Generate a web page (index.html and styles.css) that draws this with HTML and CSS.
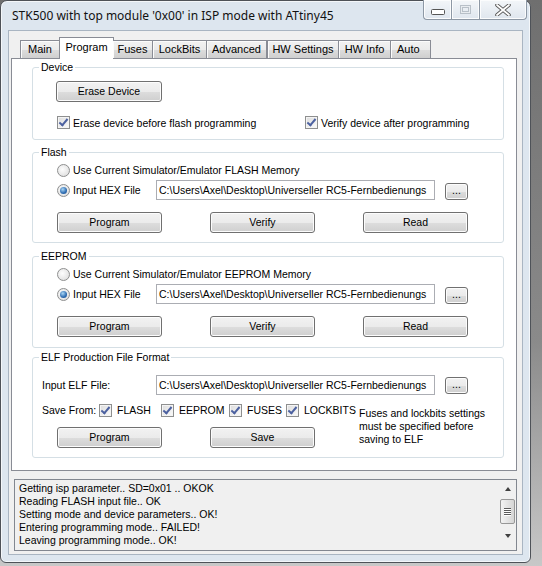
FILE: index.html
```html
<!DOCTYPE html>
<html>
<head>
<meta charset="utf-8">
<link rel="stylesheet" href="styles.css">
</head>
<body>
<div class="window">
  <div class="titlebar">
    <div class="title">STK500 with top module '0x00' in ISP mode with ATtiny45</div>
    <div class="caption">
      <div class="cbtn cmin"><svg width="14" height="6" viewBox="0 0 14 6"><rect x="0.5" y="0.5" width="13" height="5" rx="1" fill="#fff" stroke="#555"/></svg></div>
      <div class="cbtn cmax"><svg width="11" height="9" viewBox="0 0 11 9"><rect x="0.5" y="0.5" width="10" height="8" fill="none" stroke="#b8c0c8"/><rect x="1.5" y="1.5" width="8" height="6" fill="none" stroke="#e8ecf0"/><rect x="2.5" y="2.5" width="6" height="4" fill="none" stroke="#b8c0c8"/></svg></div>
      <div class="cbtn cclose"><svg width="16" height="12" viewBox="0 0 16 12"><path d="M2 1 L14 11 M14 1 L2 11" stroke="#555" stroke-width="3.6" stroke-linecap="round"/><path d="M2 1 L14 11 M14 1 L2 11" stroke="#fff" stroke-width="1.8" stroke-linecap="round"/></svg></div>
    </div>
  </div>
  <div class="client">
    <div class="tabs">
      <div class="tab t-main">Main</div>
      <div class="tab sel t-prog">Program</div>
      <div class="tab t-fuses">Fuses</div>
      <div class="tab t-lock">LockBits</div>
      <div class="tab t-adv">Advanced</div>
      <div class="tab t-hws">HW Settings</div>
      <div class="tab t-hwi">HW Info</div>
      <div class="tab t-auto">Auto</div>
    </div>
    <div class="panel">
      <div class="group g-device">
        <div class="legend">Device</div>
        <div class="row r-erase"><div class="btn b-erase">Erase Device</div></div>
        <div class="row r-checks">
          <div class="chk c-erase"><span class="box on"></span><span>Erase device before flash programming</span></div>
          <div class="chk c-verify"><span class="box on"></span><span>Verify device after programming</span></div>
        </div>
      </div>

      <div class="group g-mem g-flash">
        <div class="legend">Flash</div>
        <div class="row r-radio1"><div class="rad"><span class="dot"></span><span>Use Current Simulator/Emulator FLASH Memory</span></div></div>
        <div class="row r-radio2">
          <div class="rad r-lbl"><span class="dot on"></span><span>Input HEX File</span></div>
          <div class="tbox">C:\Users\Axel\Desktop\Universeller RC5-Fernbedienungs</div>
          <div class="btn b-dots">...</div>
        </div>
        <div class="row r-btns">
          <div class="btn b-act">Program</div>
          <div class="btn b-act">Verify</div>
          <div class="btn b-act">Read</div>
        </div>
      </div>

      <div class="group g-mem g-eeprom">
        <div class="legend">EEPROM</div>
        <div class="row r-radio1"><div class="rad"><span class="dot"></span><span>Use Current Simulator/Emulator EEPROM Memory</span></div></div>
        <div class="row r-radio2">
          <div class="rad r-lbl"><span class="dot on"></span><span>Input HEX File</span></div>
          <div class="tbox">C:\Users\Axel\Desktop\Universeller RC5-Fernbedienungs</div>
          <div class="btn b-dots">...</div>
        </div>
        <div class="row r-btns">
          <div class="btn b-act">Program</div>
          <div class="btn b-act">Verify</div>
          <div class="btn b-act">Read</div>
        </div>
      </div>

      <div class="group g-elf">
        <div class="legend">ELF Production File Format</div>
        <div class="row r-elf1">
          <div class="elf-lbl">Input ELF File:</div>
          <div class="tbox">C:\Users\Axel\Desktop\Universeller RC5-Fernbedienungs</div>
          <div class="btn b-dots">...</div>
        </div>
        <div class="row r-elf2">
          <div class="save-lbl">Save From:</div>
          <div class="chk e-flash"><span class="box on"></span><span>FLASH</span></div>
          <div class="chk e-eeprom"><span class="box on"></span><span>EEPROM</span></div>
          <div class="chk e-fuses"><span class="box on"></span><span>FUSES</span></div>
          <div class="chk e-lock"><span class="box on"></span><span>LOCKBITS</span></div>
          <div class="note">Fuses and lockbits settings<br>must be specified before<br>saving to ELF</div>
        </div>
        <div class="row r-btns">
          <div class="btn b-act">Program</div>
          <div class="btn b-act">Save</div>
        </div>
      </div>
    </div>

    <div class="log">
      <div class="log-text">
        <div>Getting isp parameter.. SD=0x01 .. OKOK</div>
        <div>Reading FLASH input file.. OK</div>
        <div>Setting mode and device parameters.. OK!</div>
        <div>Entering programming mode.. FAILED!</div>
        <div>Leaving programming mode.. OK!</div>
      </div>
      <div class="vscroll">
        <div class="arrow up"></div>
        <div class="track"><div class="thumb"><span></span><span></span><span></span><span></span></div></div>
        <div class="arrow down"></div>
      </div>
    </div>
  </div>
</div>
</body>
</html>
```
FILE: styles.css
```css
html, body {
  margin: 0;
  padding: 0;
}
body {
  width: 542px;
  height: 566px;
  overflow: hidden;
  background: linear-gradient(to bottom, #6f6f6f 0%, #8a8a8a 60%, #c8c8c8 100%);
  font-family: "Liberation Sans", Arial, sans-serif;
  font-size: 10.5px;
  color: #000;
}
.window {
  box-sizing: border-box;
  width: 531px;
  height: 563px;
  border: 1px solid #4e5258;
  border-radius: 7px 7px 6px 6px;
  background: #dde6ef;
  box-shadow: inset 0 0 0 1px #f4f7fa;
  display: flex;
  flex-direction: column;
}
.titlebar {
  height: 29px;
  display: flex;
  align-items: flex-start;
}
.title {
  margin-left: 11px;
  margin-top: 6px;
  font-family: "Noto Sans", "Open Sans", sans-serif;
  font-size: 12px;
  line-height: 18px;
  color: #111;
  white-space: nowrap;
}
.caption {
  margin-left: auto;
  margin-right: 3px;
  display: flex;
  height: 20px;
  margin-top: -1px;
}
.cbtn {
  height: 19px;
  border: 1px solid #8d98a5;
  border-top: none;
  background: linear-gradient(to bottom, #f3f6f9, #dfe6ee);
  display: flex;
  align-items: center;
  justify-content: center;
  box-shadow: inset 0 0 0 1px #fbfcfd;
}
.cmin { width: 27px; border-radius: 0 0 0 4px; border-right: none; }
.cmax { width: 27px; }
.cclose { width: 46px; border-left: none; border-radius: 0 0 4px 0; }
.cmin svg { margin-top: 5px; }

.client {
  margin: 0 7px 0 7px;
  height: 525px;
  box-sizing: border-box;
  border: 1px solid #a9b5c2;
  background: #f0f0f0;
}
.tabs {
  height: 27px;
  display: flex;
  align-items: flex-end;
  padding-left: 11px;
  position: relative;
  z-index: 1;
  font-size: 11px;
}
.tab {
  box-sizing: border-box;
  height: 18px;
  border: 1px solid #898c95;
  border-bottom: none;
  border-left: none;
  background: linear-gradient(to bottom, #f2f2f2 0%, #ebebeb 50%, #dddddd 51%, #cfcfcf 100%);
  text-align: center;
  line-height: 17px;
  white-space: nowrap;
  box-shadow: inset 1px 1px 0 #fcfcfc;
}
.t-main { width: 40px; border-left: 1px solid #898c95; }
.t-prog { width: 53px; }
.t-fuses { width: 40px; }
.t-lock { width: 54px; }
.t-adv { width: 60px; }
.t-hws { width: 72px; border-left: 1px solid #898c95; }
.t-hwi { width: 52px; }
.t-auto { width: 40px; text-align: left; padding-left: 6px; }
.tab.sel {
  height: 22px;
  margin-bottom: -1px;
  margin-left: -1px;
  margin-right: -1px;
  width: 55px;
  background: #fff;
  border-left: 1px solid #898c95;
  box-shadow: none;
  line-height: 18px;
}
.panel {
  box-sizing: border-box;
  margin-left: 2px;
  margin-right: 5px;
  height: 413px;
  border: 1px solid #898c95;
  background: #fff;
  padding: 8px 12px 0 20px;
}
.group {
  box-sizing: border-box;
  border: 1px solid #d5dfe5;
  border-radius: 3px;
}
.legend {
  height: 14px;
  line-height: 13px;
  margin-top: -7px;
  margin-left: 6px;
  padding: 0 2px;
  width: fit-content;
  background: #fff;
}
.row {
  display: flex;
  align-items: center;
}
.btn {
  box-sizing: border-box;
  height: 21px;
  border: 1px solid #707070;
  border-radius: 3px;
  background: linear-gradient(to bottom, #f2f2f2 0%, #ebebeb 50%, #dddddd 51%, #cfcfcf 100%);
  box-shadow: inset 0 0 0 1px #fcfcfc;
  text-align: center;
  line-height: 19px;
}
.g-device { height: 73px; }
.r-erase { margin-top: 6px; padding-left: 23px; }
.b-erase { width: 106px; }
.r-checks { margin-top: 14px; height: 13px; padding-left: 24px; }
.chk { display: flex; align-items: center; height: 13px; white-space: nowrap; }
.box {
  box-sizing: border-box;
  width: 13px;
  height: 13px;
  border: 1px solid #8e8f8f;
  background: linear-gradient(135deg, #dcdcdc, #fbfbfb);
  box-shadow: inset 0 0 0 1px #f4f4f4;
  margin-right: 3px;
  position: relative;
  flex: none;
}
.box.on::after {
  content: "";
  position: absolute;
  left: 3px;
  top: 0px;
  width: 3px;
  height: 7px;
  border: solid #4c61a0;
  border-width: 0 2px 2px 0;
  transform: rotate(40deg);
}
.c-erase { width: 248px; }

.g-mem { height: 91px; margin-top: 12px; }
.g-eeprom { margin-top: 13px; height: 92px; }
.rad { display: flex; align-items: center; height: 14px; white-space: nowrap; }
.dot {
  box-sizing: border-box;
  width: 13px;
  height: 13px;
  border-radius: 50%;
  border: 1px solid #8e8f8f;
  background: radial-gradient(circle at 40% 40%, #fdfdfd, #d9d9d9);
  margin-right: 3px;
  position: relative;
  flex: none;
}
.dot.on::after {
  content: "";
  position: absolute;
  left: 2px;
  top: 2px;
  width: 7px;
  height: 7px;
  border-radius: 50%;
  background: radial-gradient(circle at 40% 35%, #a9d6f5, #2d6bb0 60%, #1c4d8c);
}
.r-radio1 { margin-top: 3px; height: 14px; padding-left: 24px; }
.r-radio2 { margin-top: 3px; height: 20px; padding-left: 24px; align-items: flex-start; }
.r-radio2 .rad { height: 20px; }
.r-lbl { width: 99px; }
.tbox {
  box-sizing: border-box;
  width: 279px;
  height: 20px;
  border: 1px solid #abadb3;
  background: #fff;
  padding-left: 2px;
  line-height: 18px;
  white-space: nowrap;
  overflow: hidden;
}
.b-dots {
  width: 23px;
  height: 17px;
  margin-left: 10px;
  margin-top: 3px;
  line-height: 13px;
}
.r-btns { margin-top: 12px; padding-left: 24px; gap: 48px; }
.b-act { width: 105px; }

.g-elf { height: 101px; margin-top: 9px; }
.r-elf1 { margin-top: 10px; height: 20px; padding-left: 9px; align-items: flex-start; }
.elf-lbl { width: 114px; line-height: 20px; }
.r-elf1 .b-dots { margin-top: 2px; }
.r-elf2 { margin-top: 8px; height: 14px; padding-left: 9px; align-items: flex-start; }
.save-lbl { width: 57px; line-height: 14px; }
.r-elf2 .chk { height: 14px; }
.r-elf2 .box { margin-right: 5px; }
.e-flash { width: 62px; }
.e-eeprom { width: 68px; }
.e-fuses { width: 57px; }
.e-lock { width: 73px; }
.note {
  margin-top: 4px;
  line-height: 13px;
  white-space: nowrap;
}
.g-elf .r-btns { margin-top: 10px; }

.log {
  box-sizing: border-box;
  margin: 8px 5px 0 5px;
  height: 72px;
  border: 1px solid #828790;
  background: #f0f0f0;
  display: flex;
}
.log-text {
  flex: 1;
  padding: 2px 0 0 4px;
  line-height: 13px;
  white-space: nowrap;
  overflow: hidden;
}
.vscroll {
  width: 17px;
  display: flex;
  flex-direction: column;
  align-items: center;
  background: #f0f0f0;
}
.arrow {
  width: 0;
  height: 0;
  border-left: 3.5px solid transparent;
  border-right: 3.5px solid transparent;
}
.arrow.up { margin-top: 7px; border-bottom: 4px solid #404040; }
.arrow.down { margin-top: 8px; border-top: 4px solid #404040; }
.track { height: 30px; display: flex; align-items: center; margin-top: 5px; }
.thumb {
  box-sizing: border-box;
  width: 15px;
  height: 25px;
  border: 1px solid #979797;
  border-radius: 2px;
  background: linear-gradient(to right, #f3f3f3, #e4e4e4 50%, #d5d5d5);
  display: flex;
  flex-direction: column;
  align-items: center;
  justify-content: center;
  gap: 1px;
}
.thumb span {
  width: 7px;
  height: 1px;
  background: #5a5a5a;
  box-shadow: 0 1px 0 #fff;
}
```
